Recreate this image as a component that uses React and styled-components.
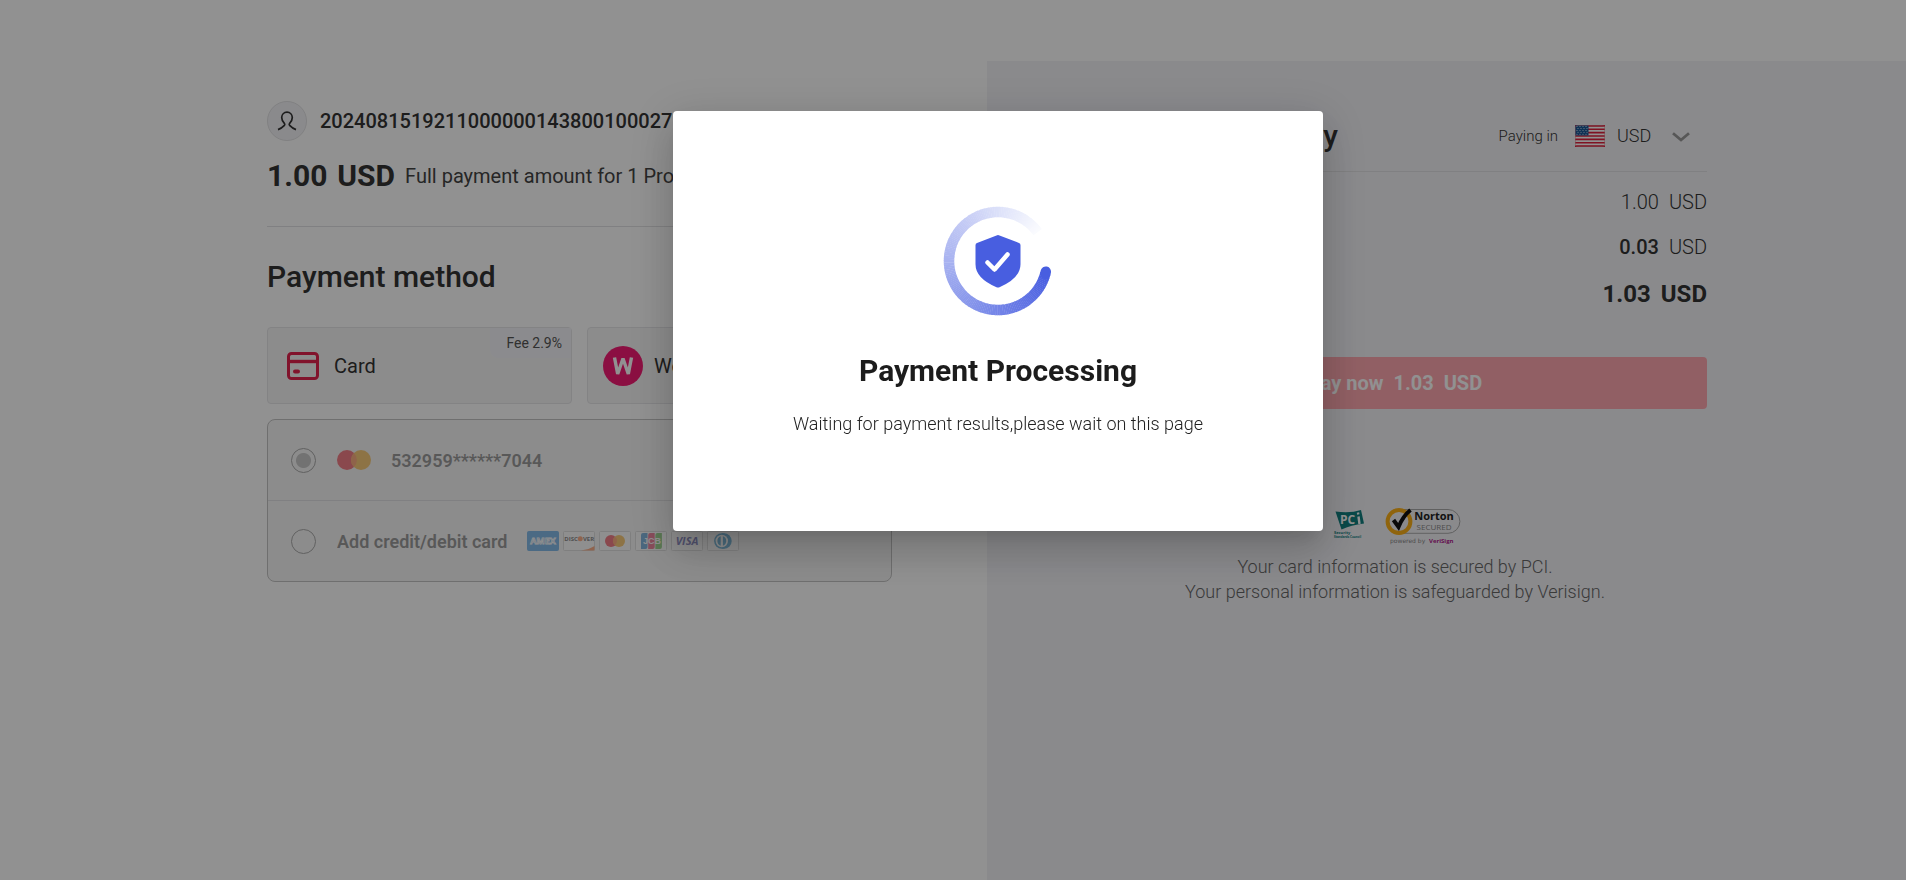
import React from 'react';
import styled, { createGlobalStyle } from 'styled-components'

const GlobalStyle = createGlobalStyle`
  * {
    box-sizing: border-box;
  }
  body {
    margin: 0;
    background: #fff;
    color: #333;
    font-family: Roboto, sans-serif;
    font-size: 20px;
  }
  h1, h2, p, dl, dd, dt {
    margin: 0;
  }
`

const Page = styled.div`
  min-height: 100vh;
  display: flex;
  flex-direction: column;
`

const TopBar = styled.header`
  height: 61px;
  flex-shrink: 0;
`

const Columns = styled.main`
  flex-grow: 1;
  display: grid;
  grid-template-columns: calc(50% + 34px) 1fr;
`

const Checkout = styled.section`
  width: 100%;
  max-width: 720px;
  justify-self: end;
  padding: 40px 95px 40px 0;
`

const Summary = styled.section`
  background: #f3f3f7;
  padding: 40px 0 40px 96px;
`

const SummaryBody = styled.div`
  max-width: 624px;
`

const Payer = styled.div`
  display: flex;
  align-items: center;
  gap: 13px;
  height: 40px;
  font-weight: 500;
`

const Avatar = styled.span`
  width: 40px;
  height: 40px;
  display: grid;
  place-items: center;
  background: #f3f3f7;
  border: 1px solid #e2e2e4;
  border-radius: 50%;
`

const AmountRow = styled.div`
  display: flex;
  align-items: center;
  gap: 10px;
  height: 86px;
  padding: 15px 0 31px;
  border-bottom: 1px solid #e2e2e4;
`

const Amount = styled.strong`
  display: flex;
  gap: 10px;
  font-size: 30px;
  font-weight: 700;
`

const Note = styled.span`
  font-weight: 400;
  color: #444;
  white-space: nowrap;
`

const Heading = styled.h2`
  font-size: 30px;
  line-height: 40px;
  font-weight: 500;
`

const MethodHeading = styled(Heading)`
  margin: 30px 0;
`

const Methods = styled.div`
  display: grid;
  grid-template-columns: 1fr 1fr;
  gap: 15px;
`

const Method = styled.button`
  position: relative;
  height: 77px;
  display: flex;
  align-items: center;
  gap: 11px;
  padding: 0 15px;
  background: #f7f7f7;
  border: 1px solid #e6e6e9;
  border-radius: 4px;
  color: #333;
  font: 400 20px Roboto, sans-serif;
`

const MethodIcon = styled.span`
  width: 40px;
  height: 40px;
  display: grid;
  place-items: center;
`

const Fee = styled.span`
  position: absolute;
  top: 0;
  right: 0;
  padding: 0 9px 0 16px;
  background: #f5f5f9;
  border-bottom-left-radius: 8px;
  font-size: 14px;
  line-height: 30px;
  color: #555;
`

const CardList = styled.div`
  margin-top: 15px;
  background: #f7f7f7;
  border: 1px solid #c4c4c4;
  border-radius: 8px;
`

const CardOption = styled.label`
  height: 80px;
  display: flex;
  align-items: center;
  padding: 0 23px;
  color: #444;
  font-size: 18px;
  font-weight: 600;

  & + & {
    height: 81px;
    border-top: 1px solid #e2e2e4;
  }
`

const Radio = styled.input`
  appearance: none;
  width: 25px;
  height: 25px;
  flex-shrink: 0;
  margin: 0 21px 0 0;
  border: 1px solid #aaa;
  border-radius: 50%;

  &:checked {
    background: radial-gradient(circle, #c8c8c8 7px, transparent 8px);
  }
`

const Faded = styled.span`
  display: flex;
  align-items: center;
  gap: 20px;
  opacity: 0.5;
`

const Brands = styled.span`
  display: flex;
  gap: 4px;
`

const SummaryHead = styled.div`
  height: 71px;
  display: flex;
  align-items: center;
  justify-content: space-between;
  border-bottom: 1px solid #e2e2e4;
`

const Currency = styled.label`
  display: flex;
  align-items: center;
  font-size: 15px;
  font-weight: 300;

  svg {
    margin-left: 17px;
  }
`

const Select = styled.select`
  appearance: none;
  width: 90px;
  margin-left: 12px;
  padding: 0;
  border: 0;
  color: #333;
  font: 300 18px/24px Roboto, sans-serif;
  background: transparent;
`

const SelectBox = styled.span`
  position: relative;
  display: flex;

  svg {
    position: absolute;
    right: 17px;
    top: 8px;
    pointer-events: none;
  }
`

const Lines = styled.dl`
  display: grid;
  padding-top: 8px;
`

const Line = styled.div`
  display: flex;
  justify-content: space-between;
  font-size: ${props => props.$total ? '24px' : '20px'};
  line-height: ${props => props.$total ? '48px' : '45px'};
  font-weight: ${props => props.$total ? 700 : 300};

  dd {
    display: flex;
    gap: 10px;
  }
`

const Value = styled.span`
  font-weight: ${props => props.$weight};
`

const PayButton = styled.button`
  width: 100%;
  height: 52px;
  margin-top: 39px;
  display: flex;
  align-items: center;
  justify-content: center;
  gap: 10px;
  background: #ffa8b0;
  border: 0;
  border-radius: 4px;
  color: #fff;
  font: 700 20px Roboto, sans-serif;
`

const Trust = styled.footer`
  margin-top: 98px;
  text-align: center;
  color: #666;
  font-size: 18px;
  line-height: 25px;
  font-weight: 300;
`

const Seals = styled.div`
  display: flex;
  justify-content: center;
  gap: 18px;
  height: 47px;
  padding-left: 6px;
`

const Overlay = styled.div`
  position: fixed;
  inset: 0;
  display: flex;
  align-items: flex-start;
  justify-content: center;
  padding: 111px 0 0 90px;
  background: rgba(0, 0, 0, 0.43);
`

const Modal = styled.div`
  width: 650px;
  display: flex;
  flex-direction: column;
  align-items: center;
  padding: 95px 24px 94px;
  background: #fff;
  border-radius: 4px;
  box-shadow: 0 11px 15px -7px rgba(0, 0, 0, 0.1),
    0 24px 38px 3px rgba(0, 0, 0, 0.1),
    0 9px 46px 8px rgba(0, 0, 0, 0.12);
`

const ModalTitle = styled.h1`
  margin-top: 35px;
  color: #1c1c1c;
  font-size: 30px;
  line-height: 40px;
  font-weight: 700;
`

const ModalText = styled.p`
  margin-top: 20px;
  color: #222;
  font-size: 18px;
  line-height: 26px;
  font-weight: 300;
`

const UserIcon = () => (
  <svg width="20" height="20" viewBox="0 0 20 20" fill="none" stroke="#333" strokeWidth="1.7">
    <path d="M1 18.600c2.700-1 4.500-2.200 6.400-4.200.7-.8.5-1.500-.2-2.300C5.700 10.600 4.700 9 4.700 6.600 4.700 3.500 7 1.200 10 1.200s5.300 2.300 5.300 5.400c0 2.400-1 4-2.500 5.500-.7.800-.9 1.500-.2 2.300 1.900 2 3.700 3.200 6.400 4.200" />
  </svg>
)

const CardIcon = () => (
  <svg width="32" height="28" viewBox="0 0 32 28" fill="none" stroke="#e3224e">
    <rect x="1.500" y="1.500" width="29" height="25" rx="3" strokeWidth="3" />
    <path d="M1 9.500h30" strokeWidth="3.400" />
    <path d="M8 19.500h3" strokeWidth="4" strokeLinecap="round" />
  </svg>
)

const WorldFirstIcon = () => (
  <svg width="40" height="40" viewBox="0 0 40 40">
    <circle cx="20" cy="20" r="20" fill="#f41c74" />
    <path d="M11.500 11.500l3.200 16.500L20 12.500 25.300 28l3.200-16.500" fill="none" stroke="#fff" strokeWidth="3.400" strokeLinejoin="bevel" />
  </svg>
)

const Mastercard = () => (
  <svg width="34" height="20" viewBox="0 0 34 20">
    <circle cx="10" cy="10" r="10" fill="#f00a1c" />
    <circle cx="24" cy="10" r="10" fill="#f9a000" />
    <path d="M17 2.900a10 10 0 0 1 0 14.200a10 10 0 0 1 0-14.200" fill="#ff6a10" />
  </svg>
)

const Brand = ({ children, fill = '#fff', stroke = '#c8c8c8' }) => (
  <svg width="32" height="20" viewBox="0 0 32 20">
    <rect x="0.500" y="0.500" width="31" height="19" rx="1" fill={fill} stroke={stroke} />
    {children}
  </svg>
)

const logoFont = { fontFamily: 'Open Sans, sans-serif', fontWeight: 700, textAnchor: 'middle' }

const BrandLogos = () => (
  <Brands>
    <Brand fill="#1480dc" stroke="#1480dc">
      <text x="16" y="13" fontSize="9" fill="#1480dc" stroke="#fff" strokeWidth="0.800" {...logoFont}>AMEX</text>
    </Brand>
    <Brand>
      <path d="M18 19.500q8-1 13.500-4.500v4.500z" fill="#ff6a20" />
      <text x="8" y="10" fontSize="6" fill="#222" {...logoFont}>DISC</text>
      <circle cx="17.200" cy="7.800" r="2.500" fill="#ff6a20" />
      <text x="25.500" y="10" fontSize="6" fill="#222" {...logoFont}>VER</text>
    </Brand>
    <Brand>
      <circle cx="12" cy="10" r="6" fill="#f00a1c" />
      <circle cx="20" cy="10" r="6" fill="#f9a000" />
      <path d="M16 5.500a6 6 0 0 1 0 9a6 6 0 0 1 0-9" fill="#ff6a10" />
    </Brand>
    <Brand>
      <path d="M8 2h4.500v14a2 2 0 0 1-2 2H6V4a2 2 0 0 1 2-2z" fill="#1478c8" />
      <path d="M15.200 2h4.500v14a2 2 0 0 1-2 2h-4.500V4a2 2 0 0 1 2-2z" fill="#e81c4c" />
      <path d="M22.400 2h4.500v14a2 2 0 0 1-2 2h-4.500V4a2 2 0 0 1 2-2z" fill="#48b030" />
      <text x="17" y="13" fontSize="9" fill="#fff" {...logoFont} fontFamily="Liberation Sans">JCB</text>
    </Brand>
    <Brand>
      <text x="16" y="14" fontSize="11" fontStyle="italic" fill="#2a2a90" {...logoFont}>VISA</text>
    </Brand>
    <Brand>
      <path d="M14.800 2.300h2.200a7.700 7.700 0 0 1 0 15.400h-2.200z" fill="#0c80c0" />
      <circle cx="14.800" cy="10" r="7.700" fill="#0c80c0" />
      <circle cx="14.800" cy="10" r="6.200" fill="#fff" />
      <path d="M13.700 5.300v9.400a5 5 0 0 1 0-9.400zM15.900 5.300v9.400a5 5 0 0 0 0-9.400z" fill="#0c80c0" />
    </Brand>
  </Brands>
)

const stars = [0, 1, 2, 3, 4].flatMap(row => [0, 1, 2, 3].map(col => [2 + col * 3 + (row % 2), 1.6 + row * 1.9]))

const Flag = () => (
  <svg width="30" height="22" viewBox="0 0 30 22">
    <rect width="30" height="22" rx="2" fill="#fff" />
    {[0, 1, 2, 3, 4, 5, 6].map(i => (
      <rect key={i} x="0" y={i * 3.38} width="30" height="1.700" rx="0.500" fill="#e0203c" />
    ))}
    <path d="M2 0h11.500v10.500H0V2a2 2 0 0 1 2-2z" fill="#1c5898" />
    {stars.map(([x, y]) => <circle key={`${x}-${y}`} cx={x} cy={y} r="0.500" fill="#fff" />)}
    <rect x="0.500" y="0.500" width="29" height="21" rx="2" fill="none" stroke="#d88890" strokeOpacity="0.500" />
  </svg>
)

const Chevron = () => (
  <svg width="18" height="10" viewBox="0 0 18 10" fill="none" stroke="#999" strokeWidth="2.800">
    <path d="M1 1.200l8 6.800 8-6.800" />
  </svg>
)

const PciSeal = () => (
  <svg width="34" height="36" viewBox="0 0 34 36">
    <path d="M2.500 4.500Q17 6.500 28 3L31 16.500Q18 18 8.500 22.500z" fill="#118080" />
    <text x="14.500" y="17" fontSize="12" fill="#fff" {...logoFont}>PC</text>
    <path d="M25.500 9.500l1 7.500M25 5.500l.3 2" stroke="#fff" strokeWidth="2.400" />
    <text x="1" y="27" fontSize="4" fill="#118080" {...logoFont} textAnchor="start">Security</text>
    <text x="1" y="31" fontSize="3" fill="#118080" {...logoFont} textAnchor="start">Standards Council</text>
  </svg>
)

const NortonSeal = () => (
  <svg width="78" height="40" viewBox="0 0 78 40">
    <path d="M14 2.500h49a11.900 11.900 0 0 1 0 23.800H14" fill="#f3f3f7" stroke="#aaa" />
    <circle cx="14" cy="14.500" r="11.400" fill="#f3f3f7" stroke="#fcb018" strokeWidth="4" />
    <path d="M8.500 13l5 7Q18 9 25.500 3" fill="none" stroke="#111" strokeWidth="4" />
    <text x="49" y="13" fontSize="11" fill="#222" {...logoFont}>Norton</text>
    <text x="49" y="23" fontSize="8" fill="#888" {...logoFont} fontWeight="400">SECURED</text>
    <text x="5" y="36" fontSize="6" fill="#888" {...logoFont} textAnchor="start" fontWeight="400" fontFamily="DejaVu Sans">powered by</text>
    <text x="44" y="36" fontSize="6" fill="#b0208c" {...logoFont} textAnchor="start">VeriSign</text>
  </svg>
)

// the ring runs from transparent (-36deg) anticlockwise round to solid blue (13deg)
const STEPS = 156
const SWEEP = 311
const point = deg => {
  const rad = deg * Math.PI / 180
  return `${54 + 49 * Math.cos(rad)} ${54 + 49 * Math.sin(rad)}`
}
const mix = t => `rgb(${[72, 94, 224].map(c => Math.round(255 - (255 - c) * t)).join(',')})`

const Spinner = () => (
  <svg width="110" height="110" viewBox="-1 -1 110 110" role="img" aria-label="Loading">
    {Array.from({ length: STEPS }, (_, i) => {
      const from = -36 - i * SWEEP / STEPS
      const to = from - SWEEP / STEPS - 0.4
      return (
        <path
          key={i}
          d={`M${point(from)}A49 49 0 0 0 ${point(to)}`}
          fill="none"
          stroke={mix((i + 4) / (STEPS + 3))}
          strokeWidth="10.500"
          strokeLinecap={i === STEPS - 1 ? 'round' : 'butt'}
        />
      )
    })}
    <path d="M52.500 28.400q1.500-.6 3 0l19.500 7.600q1.500.6 1.500 2.200v19q0 14-21 23-1.500.6-3 0-21-9-21-23v-19q0-1.600 1.500-2.200z" fill="#485ee0" />
    <path d="M43.500 55.500l7 7 13-15" fill="none" stroke="#fff" strokeWidth="4.500" strokeLinecap="round" strokeLinejoin="round" />
  </svg>
)

const App = () => (
  <>
    <GlobalStyle />
    <Page>
      <TopBar />
      <Columns>
        <Checkout>
          <Payer>
            <Avatar><UserIcon /></Avatar>
            <span>2024081519211000000143800100027</span>
          </Payer>
          <AmountRow>
            <Amount><span>1.00</span><span>USD</span></Amount>
            <Note>Full payment amount for 1 Product(s)</Note>
          </AmountRow>
          <MethodHeading>Payment method</MethodHeading>
          <Methods>
            <Method type="button">
              <MethodIcon><CardIcon /></MethodIcon>
              Card
              <Fee>Fee 2.9%</Fee>
            </Method>
            <Method type="button">
              <MethodIcon><WorldFirstIcon /></MethodIcon>
              WorldFirst
            </Method>
          </Methods>
          <CardList>
            <CardOption>
              <Radio type="radio" name="card" defaultChecked disabled />
              <Faded><Mastercard />532959******7044</Faded>
            </CardOption>
            <CardOption>
              <Radio type="radio" name="card" disabled />
              <Faded>Add credit/debit card<BrandLogos /></Faded>
            </CardOption>
          </CardList>
        </Checkout>
        <Summary>
          <SummaryBody>
            <SummaryHead>
              <Heading>Payment Summary</Heading>
              <Currency>
                Paying in
                <Flag />
                <SelectBox>
                  <Select defaultValue="USD">
                    <option>USD</option>
                  </Select>
                  <Chevron />
                </SelectBox>
              </Currency>
            </SummaryHead>
            <Lines>
              <Line>
                <dt>Amount</dt>
                <dd><span>1.00</span><span>USD</span></dd>
              </Line>
              <Line>
                <dt>Fee</dt>
                <dd><Value $weight={500}>0.03</Value><span>USD</span></dd>
              </Line>
              <Line $total>
                <dt>Total</dt>
                <dd><span>1.03</span><span>USD</span></dd>
              </Line>
            </Lines>
            <PayButton type="button" disabled>
              <span>Pay now</span><span>1.03</span><span>USD</span>
            </PayButton>
            <Trust>
              <Seals><PciSeal /><NortonSeal /></Seals>
              <p>Your card information is secured by PCI.</p>
              <p>Your personal information is safeguarded by Verisign.</p>
            </Trust>
          </SummaryBody>
        </Summary>
      </Columns>
    </Page>
    <Overlay>
      <Modal role="dialog" aria-modal="true" aria-labelledby="processing-title">
        <Spinner />
        <ModalTitle id="processing-title">Payment Processing</ModalTitle>
        <ModalText>Waiting for payment results,please wait on this page</ModalText>
      </Modal>
    </Overlay>
  </>
)

export default App;
